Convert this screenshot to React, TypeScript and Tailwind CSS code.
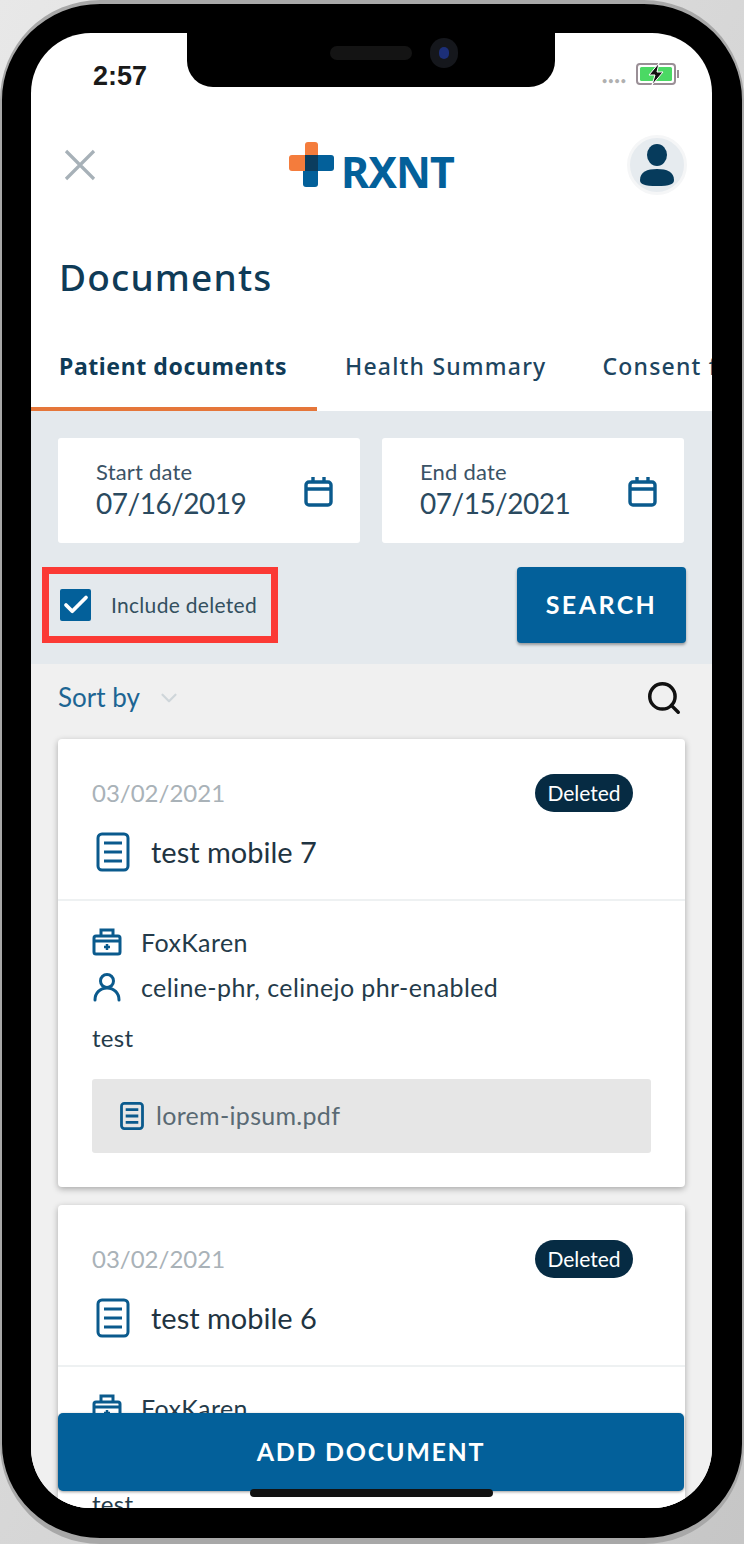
import React from 'react';
import { Search, ChevronDown, Check } from 'lucide-react';

const FONT = "font-['Lato','Noto_Sans',sans-serif]";

const CalendarIcon = () => (
  <svg width="30" height="32" viewBox="0 0 30 32" fill="none" stroke="#0a5a8d" strokeWidth="3.4" className="mt-[3px]">
    <rect x="2" y="6" width="25" height="23" rx="3" />
    <path d="M2 13h25M9 1v6M20 1v6" />
  </svg>
);

const DocIcon = ({ w = 34, h = 40, sw = 3 }: { w?: number; h?: number; sw?: number }) => (
  <svg width={w} height={h} viewBox="0 0 34 40" fill="none" stroke="#0a5a8d" strokeWidth={sw} className="shrink-0">
    <rect x="2" y="2" width="30" height="36" rx="4" />
    <path d="M8 11h18M8 20h18M8 29h18" />
  </svg>
);

const KitIcon = () => (
  <svg width="30" height="30" viewBox="0 0 30 30" fill="none" stroke="#0a5a8d" strokeWidth="3" className="shrink-0">
    <rect x="2" y="9" width="26" height="18" rx="2" />
    <path d="M9 9V3h12v6M2 14h26" />
    <path d="M15 17v6M12 20h6" strokeWidth="2.5" />
  </svg>
);

const PersonIcon = () => (
  <svg width="30" height="30" viewBox="0 0 30 30" fill="none" stroke="#0a5a8d" strokeWidth="3" className="shrink-0">
    <circle cx="15" cy="9" r="6.5" />
    <path d="M3 28c0-7 5-12 12-12s12 5 12 12" strokeLinecap="round" />
  </svg>
);

const DateField = ({ label, value }: { label: string; value: string }) => (
  <div className="flex h-[105px] flex-1 items-center justify-between rounded-[3px] bg-white pr-[26px] pl-[38px]">
    <div className="flex flex-col">
      <span className="text-[22px] leading-[24px] tracking-[0.2px] text-[#3b5366]">{label}</span>
      <span className="mt-[1px] text-[28px] leading-[36px] tracking-[-0.5px] text-[#2a4a60]">{value}</span>
    </div>
    <CalendarIcon />
  </div>
);

const DocCard = ({ title, file }: { title: string; file?: boolean }) => (
  <div className="mx-[27px] mb-[18px] shrink-0 rounded-[4px] bg-white shadow-[0_2px_6px_rgba(0,0,0,0.3)]">
    <div className="h-[162px] border-b-2 border-[#eef1f2] pt-[35px] pr-[52px] pl-[34px]">
      <div className="flex items-center justify-between">
        <span className="text-[24px] leading-[38px] text-[#a9b2b8]">03/02/2021</span>
        <span className="flex h-[38px] w-[98px] items-center justify-center rounded-full bg-[#062b43] text-[21px] text-white">Deleted</span>
      </div>
      <div className="mt-[20px] ml-[4px] flex items-center gap-[21px]">
        <DocIcon />
        <span className="text-[29px] leading-[40px] text-[#1f3442]">{title}</span>
      </div>
    </div>
    <div className="px-[34px] pt-[25px] pb-[34px]">
      <div className="flex items-center gap-[19px]">
        <KitIcon />
        <span className="text-[25px] leading-[32px] tracking-[0.4px] text-[#243b4a]">FoxKaren</span>
      </div>
      <div className="mt-[13px] flex items-center gap-[19px]">
        <PersonIcon />
        <span className="text-[25px] leading-[32px] tracking-[0.4px] text-[#243b4a]">celine-phr, celinejo phr-enabled</span>
      </div>
      <div className="mt-[19px] text-[24px] leading-[32px] tracking-[0.3px] text-[#243b4a]">test</div>
      {file && (
        <div className="mt-[25px] flex h-[74px] items-center gap-[12px] rounded-[3px] bg-[#e6e6e6] pl-[28px]">
          <DocIcon w={24} h={28} sw={4} />
          <span className="text-[25px] tracking-[0.3px] text-[#5a6a74]">lorem-ipsum.pdf</span>
        </div>
      )}
    </div>
  </div>
);

export default function App() {
  return (
    <div className={`h-[1544px] w-[744px] overflow-hidden bg-gradient-to-br from-[#e8e8e8] to-[#c6c6c6] ${FONT}`}>
      <div className="h-[1544px] rounded-[100px] border-x-[2px] border-t-[4px] border-b-[6px] border-[#a8a8a8] bg-black px-[29px] pt-[29px]">
        <div className="relative flex h-[1475px] w-[681px] flex-col overflow-hidden rounded-[60px] bg-white">
          {/* notch */}
          <div className="absolute top-0 left-[156px] flex h-[54px] w-[368px] items-start justify-center gap-[18px] rounded-b-[26px] bg-black pt-[13px] pl-[46px]">
            <div className="h-[14px] w-[82px] rounded-full bg-[#141414]" />
            <div className="-mt-[8px] flex h-[30px] w-[28px] items-center justify-center rounded-full bg-[#15171c]">
              <div className="h-[12px] w-[10px] rounded-full bg-[#1c2f78]" />
            </div>
          </div>

          {/* status bar */}
          <div className="flex h-[84px] shrink-0 items-end justify-between pr-[32px] pb-[26px] pl-[62px]">
            <span className="font-['Liberation_Sans',sans-serif] text-[27px] leading-[30px] font-bold text-[#1a1a1a]">2:57</span>
            <div className="mb-[6px] flex items-center gap-[9px]">
              <div className="mt-[12px] text-[9px] leading-none font-bold tracking-[1px] text-[#b0b0b0]">••••</div>
              <svg width="44" height="22" viewBox="0 0 44 22">
                <rect x="1" y="1" width="38" height="20" rx="3" fill="#fff" stroke="#9a8f96" strokeWidth="2" />
                <rect x="4" y="4" width="32" height="14" rx="1.5" fill="#4bd964" />
                <rect x="41" y="7" width="2" height="8" fill="#9a8f96" />
                <path d="M23 0 L13 12h6l-3 10 11-13h-6z" fill="#111" stroke="#fff" strokeWidth="1" />
              </svg>
            </div>
          </div>

          {/* header */}
          <div className="flex h-[96px] shrink-0 items-center justify-between pr-[25px] pl-[33px]">
            <svg width="32" height="32" viewBox="0 0 32 32" fill="none" stroke="#a7b1b8" strokeWidth="3.2">
              <path d="M2 2l28 28M30 2L2 30" />
            </svg>
            <div className="ml-[20px] flex items-end">
              <svg width="46" height="46" viewBox="0 0 46 46">
                <path d="M16 3a3 3 0 0 1 3-3h7a3 3 0 0 1 3 3v12H16z" fill="#f47c3c" />
                <path d="M3 13h14v16H3a3 3 0 0 1-3-3V16a3 3 0 0 1 3-3z" fill="#f47c3c" />
                <path d="M29 13h13a3 3 0 0 1 3 3v10a3 3 0 0 1-3 3H29z" fill="#03609a" />
                <path d="M14 29h15v13a3 3 0 0 1-3 3h-9a3 3 0 0 1-3-3z" fill="#03609a" />
                <rect x="16" y="13" width="13" height="16" fill="#0b3d5e" />
              </svg>
              <span className="ml-[6px] font-['Noto_Sans',sans-serif] text-[43px] leading-[32px] font-bold tracking-[-1px] text-[#03609a]">RXNT</span>
            </div>
            <div className="flex h-[60px] w-[60px] items-center justify-center rounded-full border-[3px] border-[#f5f6f7] bg-[#e6ebef]">
              <svg width="36" height="42" viewBox="0 0 36 42" fill="#063b5c">
                <ellipse cx="18" cy="11" rx="10" ry="11" />
                <path d="M1 36c0-8 7-11 17-11s17 3 17 11c0 4-4 6-17 6S1 40 1 36z" />
              </svg>
            </div>
          </div>

          {/* title */}
          <h1 className="mt-[40px] shrink-0 pl-[28px] font-['Noto_Sans',sans-serif] text-[37px] leading-[48px] font-medium tracking-[1.2px] text-[#0f3b57]">Documents</h1>

          {/* tabs */}
          <div className="mt-[38px] flex h-[72px] shrink-0 overflow-hidden font-['Noto_Sans',sans-serif]">
            <div className="w-[286px] shrink-0 border-b-[4px] border-[#e5763a] pt-[11px] pl-[28px] text-[23px] leading-[32px] font-bold tracking-[0.6px] whitespace-nowrap text-[#0f3b57]">Patient documents</div>
            <div className="ml-[28px] shrink-0 pt-[11px] text-[23px] leading-[32px] font-medium tracking-[1.2px] whitespace-nowrap text-[#1d4560]">Health Summary</div>
            <div className="ml-[56px] shrink-0 pt-[11px] text-[23px] leading-[32px] font-medium tracking-[1.2px] whitespace-nowrap text-[#1d4560]">Consent forms</div>
          </div>

          {/* filters */}
          <div className="h-[253px] shrink-0 bg-[#e4e9ed] pt-[27px] pr-[28px] pl-[27px]">
            <div className="flex gap-[22px]">
              <DateField label="Start date" value="07/16/2019" />
              <DateField label="End date" value="07/15/2021" />
            </div>
            <div className="mt-[24px] -mr-[2px] flex items-start justify-between">
              <div className="-ml-[16px] flex h-[76px] w-[236px] items-center gap-[20px] border-[7px] border-[#fb3a35] pl-[11px]">
                <div className="flex h-[32px] w-[31px] shrink-0 items-center justify-center rounded-[2px] bg-[#03609a]">
                  <Check size={30} strokeWidth={3} color="#fff" />
                </div>
                <span className="text-[21px] tracking-[0.3px] whitespace-nowrap text-[#33505f]">Include deleted</span>
              </div>
              <div className="flex h-[76px] w-[169px] items-center justify-center rounded-[4px] bg-[#03609a] text-[25px] font-bold tracking-[2.4px] text-white shadow-[0_2px_3px_rgba(0,0,0,0.35)]">SEARCH</div>
            </div>
          </div>

          {/* list */}
          <div className="flex min-h-0 flex-1 flex-col overflow-hidden bg-[#f0f0f0]">
            <div className="flex h-[75px] shrink-0 items-center justify-between pr-[29px] pb-[8px] pl-[27px]">
              <div className="flex items-center gap-[16px]">
                <span className="text-[26px] text-[#1d6593]">Sort by</span>
                <ChevronDown size={26} strokeWidth={2} color="#cfd6da" />
              </div>
              <Search size={38} strokeWidth={2.2} color="#111" />
            </div>
            <DocCard title="test mobile 7" file />
            <DocCard title="test mobile 6" />
          </div>

          {/* bottom button */}
          <div className="absolute top-[1380px] left-[27px] flex h-[78px] w-[626px] items-center justify-center rounded-[5px] bg-[#03609a] text-[25px] font-bold tracking-[1.7px] text-white shadow-[0_1px_3px_rgba(0,0,0,0.4)]">ADD DOCUMENT</div>
          <div className="absolute top-[1456px] left-[219px] h-[8px] w-[243px] rounded-full bg-[#111]" />
        </div>
      </div>
    </div>
  );
}
